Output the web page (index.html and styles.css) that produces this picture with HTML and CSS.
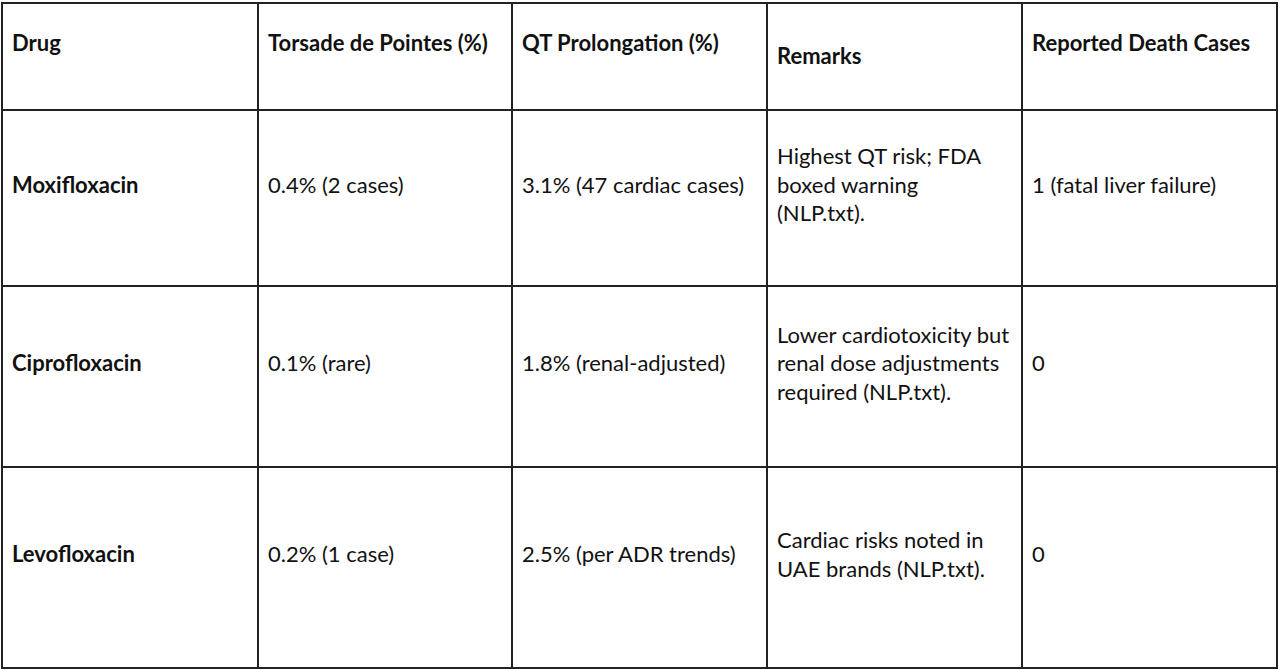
FILE: index.html
```html
<!DOCTYPE html>
<html lang="en">
<head>
<meta charset="utf-8">
<title>Fluoroquinolone cardiac risk</title>
<link rel="stylesheet" href="styles.css">
</head>
<body>
<div class="page">
<table class="risk">
  <colgroup>
    <col class="c1"><col class="c2"><col class="c3"><col class="c4"><col class="c5">
  </colgroup>
  <thead>
    <tr class="r-head">
      <th>Drug</th>
      <th>Torsade de Pointes (%)</th>
      <th>QT Prolongation (%)</th>
      <th class="centered">Remarks</th>
      <th>Reported Death Cases</th>
    </tr>
  </thead>
  <tbody>
    <tr class="r1">
      <td class="drug">Moxifloxacin</td>
      <td>0.4% (2 cases)</td>
      <td>3.1% (47 cardiac cases)</td>
      <td>Highest QT risk; FDA<br>boxed warning<br>(NLP.txt).</td>
      <td>1 (fatal liver failure)</td>
    </tr>
    <tr class="r2">
      <td class="drug">Ciprofloxacin</td>
      <td>0.1% (rare)</td>
      <td>1.8% (renal-adjusted)</td>
      <td>Lower cardiotoxicity but<br>renal dose adjustments<br>required (NLP.txt).</td>
      <td>0</td>
    </tr>
    <tr class="r3">
      <td class="drug">Levofloxacin</td>
      <td>0.2% (1 case)</td>
      <td>2.5% (per ADR trends)</td>
      <td>Cardiac risks noted in<br>UAE brands (NLP.txt).</td>
      <td>0</td>
    </tr>
  </tbody>
</table>
</div>
</body>
</html>
```
FILE: styles.css
```css
html, body {
  margin: 0;
  padding: 0;
  background: #ffffff;
}
.page {
  padding: 2px 0 0 1px;
}
.risk {
  border-collapse: collapse;
  table-layout: fixed;
  width: 1277px;
  font-family: Lato, "Open Sans", sans-serif;
  font-size: 22px;
  line-height: 28.5px;
  color: #111111;
}
.c1 { width: 256px; }
.c2 { width: 254px; }
.c3 { width: 255px; }
.c4 { width: 255px; }
.c5 { width: 255px; }
.risk th,
.risk td {
  border: 2px solid #222222;
  padding: 0 8px 26px 9px;
  vertical-align: middle;
  text-align: left;
  white-space: nowrap;
}
.risk th {
  font-weight: 700;
}
.risk th.centered {
  padding-bottom: 0;
}
.risk td.drug {
  font-weight: 700;
}
.r-head { height: 107px; }
.r1 { height: 176px; }
.r2 { height: 181px; }
.r3 { height: 201px; }
```
